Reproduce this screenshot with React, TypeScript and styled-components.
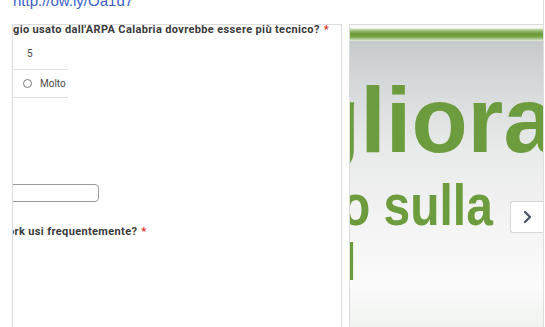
import React from "react";
import styled, { createGlobalStyle } from "styled-components";

const GlobalStyle = createGlobalStyle`
  html, body {
    margin: 0;
    padding: 0;
    background: #ffffff;
    overflow: hidden;
  }
  body {
    font-family: Roboto, "Liberation Sans", Arial, sans-serif;
  }
`;

const Page = styled.div`
  width: 543px;
  height: 327px;
  border-right: 1px solid #dedede;
  display: flex;
  flex-direction: column;
`;

const LinkLine = styled.a`
  display: block;
  margin: -8px 0 15px 13px;
  font: 15px/17px "Liberation Sans", Arial, sans-serif;
  color: #3d5fc4;
  text-decoration: none;
`;

const Row = styled.div`
  flex: 1;
  display: flex;
  gap: 7px;
  padding-left: 12px;
  min-height: 0;
`;

const FormPanel = styled.section`
  width: 330px;
  box-sizing: border-box;
  border: 1px solid #dcdcdc;
  border-bottom: none;
  overflow: hidden;
  display: flex;
  flex-direction: column;
  align-items: flex-start;
  background: #fff;
`;

const Question = styled.div<{ $shift?: number; $top?: number }>`
  margin-left: ${(p) => -(p.$shift ?? 0)}px;
  margin-top: ${(p) => p.$top ?? 0}px;
  font-size: 11px;
  line-height: 10px;
  font-weight: 700;
  letter-spacing: 0.36px;
  color: #3a3a3a;
  white-space: nowrap;
`;

const Required = styled.span`
  color: #d93025;
  margin-left: 4px;
`;

const ScaleTable = styled.div`
  margin-top: 7px;
  width: 55px;
  display: flex;
  flex-direction: column;
`;

const ScaleRow = styled.div<{ $pb?: number }>`
  height: 28px;
  box-sizing: border-box;
  border-bottom: 1px solid #e2e2e2;
  display: flex;
  align-items: center;
  padding-bottom: ${(p) => p.$pb ?? 0}px;
  font-size: 10px;
  color: #4a4a4a;
`;

const ScaleNumber = styled.span`
  margin-left: 14px;
`;

const Radio = styled.span`
  margin-left: 10px;
  width: 9px;
  height: 9px;
  box-sizing: border-box;
  border: 1.5px solid #7a7a7a;
  border-radius: 50%;
`;

const RadioLabel = styled.span`
  margin-left: 8px;
`;

const TextInput = styled.div`
  margin-top: 86px;
  margin-left: -10px;
  width: 96px;
  height: 18px;
  box-sizing: border-box;
  border: 1.5px solid #9a9a9a;
  border-radius: 4px;
`;

const SlidePanel = styled.section`
  flex: 1;
  position: relative;
  border-top: 1px solid #dcdcdc;
  border-left: 1px solid #dcdcdc;
  overflow: hidden;
`;

const SlideImage = styled.svg`
  display: block;
`;

const NextButton = styled.button`
  position: absolute;
  top: 176px;
  right: 0;
  width: 33px;
  height: 32px;
  box-sizing: border-box;
  padding: 0;
  background: #ffffff;
  border: 1px solid #d8d8d8;
  border-right: none;
  border-radius: 3px 0 0 3px;
  display: flex;
  align-items: center;
  justify-content: center;
`;

const green = "#6c9c3d";

function Slide() {
  return (
    <SlideImage width="193" height="302" viewBox="0 0 193 302">
      <defs>
        <linearGradient id="bg" x1="0" y1="0" x2="0" y2="302" gradientUnits="userSpaceOnUse">
          <stop offset="0" stopColor="#f6f6f6" />
          <stop offset="0.05" stopColor="#c5cacc" />
          <stop offset="0.2" stopColor="#d6d9da" />
          <stop offset="0.4" stopColor="#e8e9e9" />
          <stop offset="0.66" stopColor="#f4f4f4" />
          <stop offset="0.86" stopColor="#fbfbfb" />
          <stop offset="1" stopColor="#f0f3f0" />
        </linearGradient>
        <linearGradient id="bar" x1="0" y1="3" x2="0" y2="16" gradientUnits="userSpaceOnUse">
          <stop offset="0" stopColor="#f2f6ee" />
          <stop offset="0.2" stopColor="#9cc075" />
          <stop offset="0.45" stopColor="#6a9a3a" />
          <stop offset="0.7" stopColor="#7aa84c" />
          <stop offset="1" stopColor="#e6eee0" />
        </linearGradient>
        <filter id="soft" x="-5%" y="-5%" width="110%" height="110%">
          <feGaussianBlur stdDeviation="0.55" />
        </filter>
      </defs>
      <rect x="0" y="0" width="193" height="302" fill="url(#bg)" />
      <rect x="0" y="0" width="193" height="4" fill="#fafafa" />
      <rect x="0" y="3" width="193" height="13" fill="url(#bar)" />
      <g fill={green} fontFamily="'Liberation Sans', Arial, sans-serif" fontWeight="700" filter="url(#soft)">
        <text transform="translate(-45.9 127)" fontSize="92">gliora</text>
        <text transform="translate(-9.1 200) scale(1 1.2)" fontSize="48">o sulla</text>
        <text transform="translate(-6 255) scale(1 1.18)" fontSize="44">l</text>
      </g>
    </SlideImage>
  );
}

export default function App() {
  return (
    <>
      <GlobalStyle />
      <Page>
        <LinkLine href="#">http://ow.ly/Oa1d7</LinkLine>
        <Row>
          <FormPanel>
            <Question>
              gio usato dall'ARPA Calabria dovrebbe essere più tecnico?<Required>*</Required>
            </Question>
            <ScaleTable>
              <ScaleRow $pb={4}>
                <ScaleNumber>5</ScaleNumber>
              </ScaleRow>
              <ScaleRow>
                <Radio />
                <RadioLabel>Molto</RadioLabel>
              </ScaleRow>
            </ScaleTable>
            <TextInput />
            <Question $shift={5} $top={25}>
              ork usi frequentemente?<Required>*</Required>
            </Question>
          </FormPanel>
          <SlidePanel>
            <Slide />
            <NextButton aria-label="Avanti">
              <svg width="9" height="14" viewBox="0 0 9 14">
                <path d="M2 2 L7 7 L2 12" fill="none" stroke="#4e5567" strokeWidth="2.3" strokeLinecap="round" strokeLinejoin="round" />
              </svg>
            </NextButton>
          </SlidePanel>
        </Row>
      </Page>
    </>
  );
}
